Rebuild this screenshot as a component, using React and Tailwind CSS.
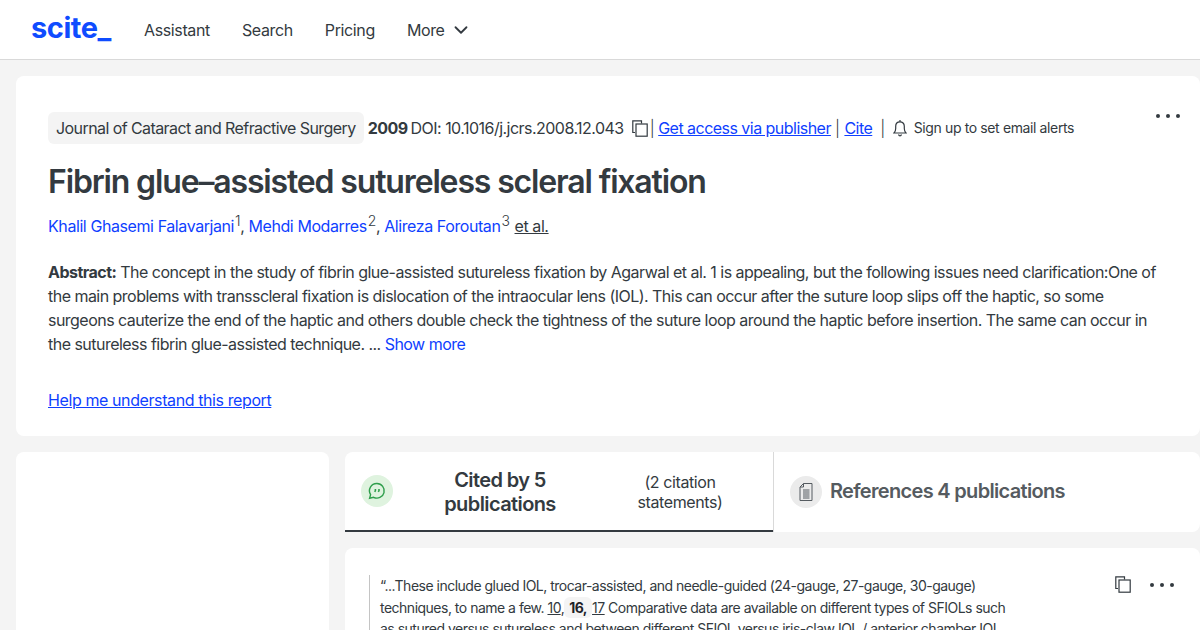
import { ChevronDown } from 'lucide-react';

function CopyIcon() {
  return (
    <svg width="16" height="17" viewBox="0 0 16 17" fill="none" stroke="#333a40" strokeWidth="1.2" className="shrink-0">
      <path d="M3 12.5H.8V.8H9.5V3.5" />
      <rect x="4" y="4" width="11.2" height="12.2" />
    </svg>
  );
}

function BellIcon() {
  return (
    <svg width="14" height="18" viewBox="0 0 14 18" fill="none" stroke="#333a40" strokeWidth="1.2" className="shrink-0">
      <path d="M1 14h12c-1.2-1.4-1.7-2.6-1.7-4.6V7.2C11.3 4.6 9.5 2.8 7 2.8S2.7 4.6 2.7 7.2v2.2C2.7 11.4 2.2 12.6 1 14Z" />
      <path d="M7 1v1.8M5.5 15.5c.3.9.8 1.3 1.5 1.3s1.2-.4 1.5-1.3" />
    </svg>
  );
}

function Dots() {
  return (
    <div className="flex gap-[6px]">
      <span className="w-1 h-1 rounded-full bg-[#333a40]" />
      <span className="w-1 h-1 rounded-full bg-[#333a40]" />
      <span className="w-1 h-1 rounded-full bg-[#333a40]" />
    </div>
  );
}

function Link({ children }) {
  return <a className="text-[#0f3fff] underline">{children}</a>;
}

export default function App() {
  return (
    <div className="h-[630px] overflow-hidden bg-[#f4f4f4] text-[#333a40] font-['Inter',sans-serif] tracking-[-0.033em]">
      {/* Top nav */}
      <header className="h-[60px] bg-white border-b border-[#d9d9d9] flex items-center pl-8">
        <div className="w-[113px] -ml-px text-[#0f4cff] text-[29px] font-bold leading-none tracking-[-0.015em] -mt-1">scite_</div>
        <nav className="flex items-center gap-8 text-base text-[#333a40] tracking-[-0.023em]">
          <a>Assistant</a>
          <a>Search</a>
          <a>Pricing</a>
          <a className="flex items-center gap-[5px]">
            More <ChevronDown size={22} strokeWidth={2} />
          </a>
        </nav>
      </header>

      <main className="pt-4 pl-4">
        {/* Report header */}
        <section className="relative h-[360px] bg-white rounded-lg px-8 pt-9">
          <div className="absolute right-5 top-[38px]">
            <Dots />
          </div>
          <div className="flex items-center h-8 text-base whitespace-nowrap">
            <span className="bg-[#f4f4f4] rounded-md h-8 px-2 flex items-center mr-1 tracking-[-0.036em]">Journal of Cataract and Refractive Surgery</span>
            <b className="font-bold mr-[3px]">2009</b>
            <span className="mr-2">DOI: 10.1016/j.jcrs.2008.12.043</span>
            <CopyIcon />
            <span className="ml-[2px] mr-1 font-light">|</span>
            <Link>Get access via publisher</Link>
            <span className="ml-1 mr-[5px] font-light">|</span>
            <Link>Cite</Link>
            <span className="ml-2 mr-2 font-light">|</span>
            <BellIcon />
            <span className="ml-[7px] text-sm tracking-[-0.027em]">Sign up to set email alerts</span>
          </div>
          <h1 className="mt-[14px] text-[32px] leading-[48px] font-semibold tracking-[-0.036em]">Fibrin glue–assisted sutureless scleral fixation</h1>
          <div className="mt-2 h-6 flex items-center text-base text-[#333a40] whitespace-nowrap tracking-[-0.026em]">
            <a className="text-[#0f3fff]">Khalil Ghasemi Falavarjani</a>
            <sup className="text-sm ml-px font-light top-[-5px]">1</sup>,&nbsp;
            <a className="text-[#0f3fff]">Mehdi Modarres</a>
            <sup className="text-sm ml-px font-light top-[-5px]">2</sup>,&nbsp;
            <a className="text-[#0f3fff]">Alireza Foroutan</a>
            <sup className="text-sm ml-px font-light top-[-5px]">3</sup>
            <span className="ml-[5px] underline">et al.</span>
          </div>
          <p className="mt-[22px] text-base leading-6 w-[1112px] tracking-[-0.033em]">
            <b className="font-bold">Abstract:</b> The concept in the study of fibrin glue-assisted sutureless fixation by Agarwal et al. 1 is appealing, but the following issues need clarification:One of the main problems with transscleral fixation is dislocation of the intraocular lens (IOL). This can occur after the suture loop slips off the haptic, so some surgeons cauterize the end of the haptic and others double check the tightness of the suture loop around the haptic before insertion. The same can occur in the sutureless fibrin glue-assisted technique. ... <a className="text-[#0f3fff]">Show more</a>
          </p>
          <div className="mt-8 tracking-[-0.025em]">
            <Link>Help me understand this report</Link>
          </div>
        </section>

        <div className="mt-4 flex gap-4">
          {/* Left sidebar */}
          <aside className="w-[313px] h-[300px] shrink-0 bg-white rounded-lg" />

          <div className="flex-1 min-w-0">
            {/* Tabs */}
            <div className="flex h-20">
              <div className="w-[428px] bg-white rounded-tl-lg border-b-2 border-[#333a40] flex items-center pl-4">
                <div className="w-8 h-8 rounded-full bg-[#dff3df] flex items-center justify-center shrink-0">
                  <svg width="20" height="20" viewBox="0 0 20 20" fill="none" stroke="#2e9e4b" strokeWidth="1.4">
                    <path d="M10 2.5a7.3 7.3 0 1 1-3.4 13.8L2.6 17.3l1-3.6A7.3 7.3 0 0 1 10 2.5Z" />
                    <path d="M8.4 8v1.6l-.7 1.2M12 8v1.6l-.7 1.2" strokeWidth="1.6" />
                  </svg>
                </div>
                <div className="w-[214px] text-center text-xl leading-6 font-semibold tracking-[-0.03em] mt-[2px]">
                  Cited by 5
                  <br />
                  publications
                </div>
                <div className="w-[146px] text-center text-base leading-5 mt-[2px] tracking-[-0.025em]">
                  (2 citation
                  <br />
                  statements)
                </div>
              </div>
              <div className="flex-1 bg-white rounded-r-lg border-l border-[#d9d9d9] flex items-center pl-4 text-[#555b60]">
                <div className="w-8 h-8 rounded-full bg-[#ebebeb] flex items-center justify-center shrink-0">
                  <svg width="18" height="20" viewBox="0 0 18 20" fill="none" stroke="#555b60" strokeWidth="1">
                    <path d="M6.5 1.5h8.5v17H3V5Z" />
                    <path d="M6.5 1.5V5H3M6 8h6.5M6 10h6.5M6 12h6.5M6 14h6.5M6 16h6.5" />
                  </svg>
                </div>
                <div className="ml-2 text-xl font-semibold whitespace-nowrap tracking-[-0.034em] -mt-[2px]">References 4 publications</div>
              </div>
            </div>

            {/* Citation statement */}
            <article className="relative mt-4 h-[200px] bg-white rounded-lg pt-[27px] pl-6">
              <div className="absolute top-[28px] right-[26px] flex items-center gap-[19px]">
                <CopyIcon />
                <Dots />
              </div>
              <p className="border-l border-[#c4c4c4] pl-[10px] w-[645px] text-sm leading-[21.5px] tracking-[-0.036em]">
                “...These include glued IOL, trocar-assisted, and needle-guided (24-gauge, 27-gauge, 30-gauge) techniques, to name a few. <span className="underline">10</span>,<b className="inline-block bg-[#f4f4f4] rounded-md px-[5px] font-bold text-[#1f2328]">16,</b><span className="underline">17</span> Comparative data are available on different types of SFIOLs such as sutured versus sutureless and between different SFIOL versus iris-claw IOL / anterior chamber IOL
              </p>
            </article>
          </div>
        </div>
      </main>
    </div>
  );
}
